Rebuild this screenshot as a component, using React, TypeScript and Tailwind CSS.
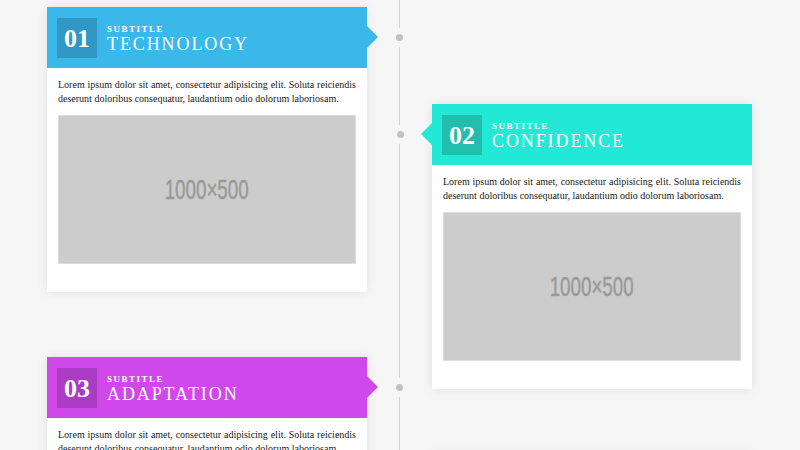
import React from "react";

type Item = {
  num: string;
  title: string;
  header: string;
  box: string;
  arrow: string;
  side: "left" | "right";
};

const items: Item[] = [
  { num: "01", title: "TECHNOLOGY", header: "bg-[#39b8e9]", box: "bg-[#3197c4]", arrow: "border-l-[#39b8e9]", side: "left" },
  { num: "02", title: "CONFIDENCE", header: "bg-[#22e9d5]", box: "bg-[#21beae]", arrow: "border-r-[#22e9d5]", side: "right" },
  { num: "03", title: "ADAPTATION", header: "bg-[#cf49ea]", box: "bg-[#a93cc2]", arrow: "border-l-[#cf49ea]", side: "left" },
  { num: "04", title: "PASSION", header: "bg-[#f2a53a]", box: "bg-[#c9862b]", arrow: "border-r-[#f2a53a]", side: "right" },
];

const serif = { fontFamily: '"Liberation Serif", "Times New Roman", serif' };

function Card({ item }: { item: Item }) {
  const left = item.side === "left";
  return (
    <div className="relative w-[320px] bg-white shadow-[0_0_10px_rgba(0,0,0,0.09)]">
      <div className={`relative flex h-[61px] items-center pl-[10px] ${item.header}`}>
        <div
          className={`flex h-[40px] w-[40px] items-center justify-center pt-[1px] text-[26px] font-bold text-white ${item.box}`}
          style={serif}
        >
          {item.num}
        </div>
        <div className="ml-[10px] flex flex-col pt-[2px] text-white" style={serif}>
          <span className="text-[9px] leading-[10px] font-bold tracking-[1.5px]">SUBTITLE</span>
          <span className="text-[18px] leading-[20px] tracking-[1.9px]">{item.title}</span>
        </div>
        {left ? (
          <div className={`absolute left-full top-[19px] h-0 w-0 border-y-[11px] border-l-[11px] border-y-transparent ${item.arrow}`} />
        ) : (
          <div className={`absolute right-full top-[19px] h-0 w-0 border-y-[11px] border-r-[11px] border-y-transparent ${item.arrow}`} />
        )}
      </div>
      <div className="px-[11px] pt-[10px] pb-[28px]">
        <p className="text-[10px] leading-[14px] text-[#1a1a1a] text-justify" style={serif}>
          Lorem ipsum dolor sit amet, consectetur adipisicing elit. Soluta reiciendis deserunt doloribus consequatur, laudantium odio dolorum laboriosam.
        </p>
        <div className="mt-[9px] flex h-[149px] items-center justify-center overflow-hidden border border-[#dcdcdc] bg-[#cccccc]">
          <span
            className="inline-block scale-x-[0.67] text-[28px] text-[#999999] [-webkit-text-stroke:0.4px_#999999]"
            style={{ fontFamily: '"Liberation Sans", Arial, sans-serif' }}
          >
            1000×500
          </span>
        </div>
      </div>
      <div
        className={`absolute top-[21px] h-[19px] w-[19px] rounded-full border-[6px] border-[#f6f6f6] bg-[#c2c2c2] ${
          left ? "left-[calc(100%+23px)]" : "right-[calc(100%+22px)]"
        }`}
      />
    </div>
  );
}

export default function App() {
  const leftItems = items.filter((i) => i.side === "left");
  const rightItems = items.filter((i) => i.side === "right");
  return (
    <div className="h-[450px] w-[800px] overflow-hidden bg-[#f6f6f6]">
      <div className="flex pl-[47px]">
        <div className="flex w-[320px] flex-col gap-[65px] pt-[7px]">
          {leftItems.map((it) => (
            <Card key={it.num} item={it} />
          ))}
        </div>
        <div className="flex w-[65px] justify-center">
          <div className="min-h-[900px] w-px bg-[#d2d2d2]" />
        </div>
        <div className="flex w-[320px] flex-col gap-[65px] pt-[104px]">
          {rightItems.map((it) => (
            <Card key={it.num} item={it} />
          ))}
        </div>
      </div>
    </div>
  );
}
